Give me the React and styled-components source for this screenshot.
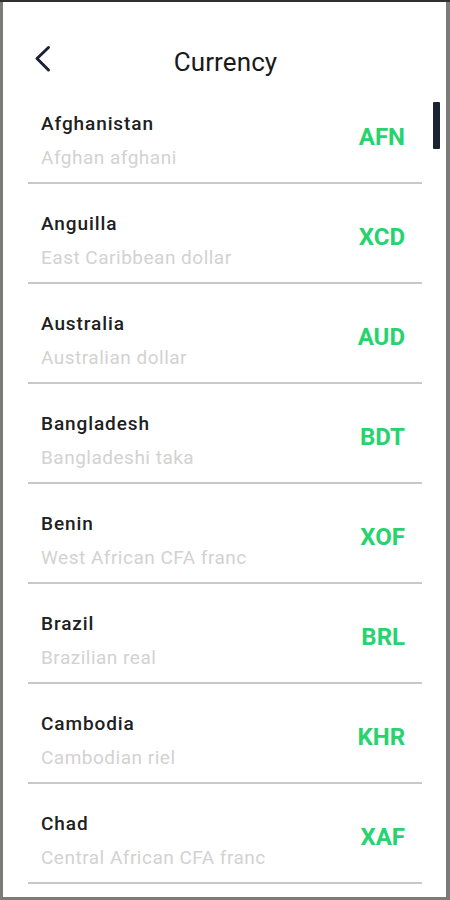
import React from "react";
import styled, { createGlobalStyle } from "styled-components";

const Global = createGlobalStyle`
  html, body { margin: 0; padding: 0; }
  body { font-family: Roboto, "Liberation Sans", Arial, sans-serif; background: #7a7a7a; }
  * { box-sizing: border-box; }
`;

const Frame = styled.div`
  height: 900px;
  background: #7d7b78;
  border-top: 2px solid #2f2f2f;
  padding: 0 4px 3px 3px;
`;

const Card = styled.div`
  position: relative;
  height: 100%;
  background: #ffffff;
  overflow: hidden;
  display: flex;
  flex-direction: column;
`;

const Header = styled.header`
  height: 82px;
  flex-shrink: 0;
  padding-top: 37px;
  display: grid;
  grid-template-columns: 1fr auto 1fr;
  align-items: center;
`;

const BackButton = styled.button`
  justify-self: start;
  margin: -5px 0 0 30px;
  padding: 0;
  border: 0;
  background: transparent;
  display: flex;
  cursor: pointer;
`;

const Title = styled.h1`
  margin: 0 0 0 2px;
  font-size: 26px;
  line-height: 30px;
  font-weight: 400;
  color: #1a1a1a;
  letter-spacing: 0.1px;
`;

const List = styled.ul`
  list-style: none;
  margin: 0;
  padding: 0;
`;

const Row = styled.li`
  margin: 0 24px 0 25px;
  height: 100px;
  border-bottom: 2px solid #c8c8c8;
  display: flex;
  align-items: center;
  justify-content: space-between;
  padding: 0 17px 0 13px;
`;

const Info = styled.div`
  align-self: stretch;
  padding: 28px 0 11px;
  display: flex;
  flex-direction: column;
  gap: 10px;
`;

const Country = styled.span`
  font-size: 19px;
  line-height: 24px;
  font-weight: 500;
  letter-spacing: 0.9px;
  color: #202020;
`;

const CurrencyName = styled.span`
  font-size: 19px;
  line-height: 24px;
  font-weight: 400;
  letter-spacing: 0.5px;
  color: #d2d2d2;
`;

const Code = styled.span`
  padding-top: 8px;
  font-size: 24px;
  line-height: 28px;
  font-weight: 700;
  color: #27d36e;
`;

const Scrollbar = styled.div`
  position: absolute;
  top: 100px;
  right: 6px;
  width: 7px;
  height: 47px;
  border-radius: 1px;
  background: #1b2234;
`;

const items = [
  ["Afghanistan", "Afghan afghani", "AFN"],
  ["Anguilla", "East Caribbean dollar", "XCD"],
  ["Australia", "Australian dollar", "AUD"],
  ["Bangladesh", "Bangladeshi taka", "BDT"],
  ["Benin", "West African CFA franc", "XOF"],
  ["Brazil", "Brazilian real", "BRL"],
  ["Cambodia", "Cambodian riel", "KHR"],
  ["Chad", "Central African CFA franc", "XAF"],
];

export default function App() {
  return (
    <>
      <Global />
      <Frame>
        <Card>
          <Header>
            <BackButton aria-label="Back">
              <svg width="18" height="28" viewBox="0 0 18 28" fill="none">
                <path
                  d="M15.5 2.5 L4 13.5 L15.5 25"
                  stroke="#1a2138"
                  strokeWidth="3"
                  strokeLinecap="round"
                  strokeLinejoin="round"
                />
              </svg>
            </BackButton>
            <Title>Currency</Title>
            <div />
          </Header>
          <List>
            {items.map(([country, name, code]) => (
              <Row key={code}>
                <Info>
                  <Country>{country}</Country>
                  <CurrencyName>{name}</CurrencyName>
                </Info>
                <Code>{code}</Code>
              </Row>
            ))}
          </List>
          <Scrollbar />
        </Card>
      </Frame>
    </>
  );
}
